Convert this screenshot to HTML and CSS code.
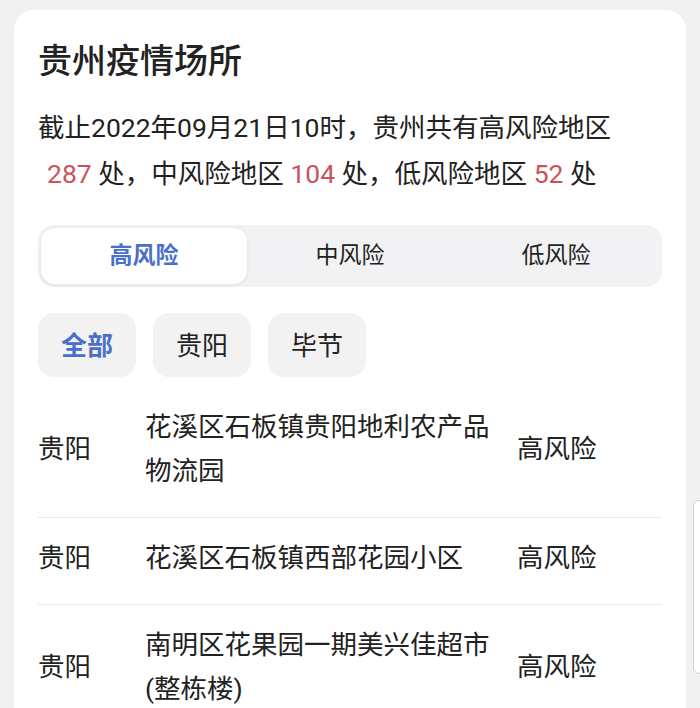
FILE: index.html
```html
<!DOCTYPE html>
<html lang="zh-CN">
<head>
<meta charset="UTF-8">
<meta name="viewport" content="width=device-width, initial-scale=1.0">
<title>贵州疫情场所</title>
<link rel="stylesheet" href="styles.css">
</head>
<body>
    <div class="card">
        <h1 class="title">贵州疫情场所</h1>
        <p class="summary">截止2022年09月21日10时，贵州共有高风险地区<br><span class="num first">287</span> 处，中风险地区 <span class="num">104</span> 处，低风险地区 <span class="num">52</span> 处</p>

        <div class="tabs">
            <div class="tab active">高风险</div>
            <div class="tab">中风险</div>
            <div class="tab">低风险</div>
        </div>

        <div class="chips">
            <div class="chip active">全部</div>
            <div class="chip">贵阳</div>
            <div class="chip">毕节</div>
        </div>

        <div class="list">
            <div class="row">
                <div class="city">贵阳</div>
                <div class="place">花溪区石板镇贵阳地利农产品物流园</div>
                <div class="level">高风险</div>
            </div>
            <div class="row">
                <div class="city">贵阳</div>
                <div class="place">花溪区石板镇西部花园小区</div>
                <div class="level">高风险</div>
            </div>
            <div class="row">
                <div class="city">贵阳</div>
                <div class="place">南明区花果园一期美兴佳超市(整栋楼)</div>
                <div class="level">高风险</div>
            </div>
        </div>
    </div>

    <div class="scroll-handle"></div>
</body>
</html>
```

FILE: styles.css
```css
body{
margin: 0;
background: #f1f1f1;
font-family: Roboto, "Noto Sans CJK SC", sans-serif;
color: #222;
overflow: hidden;
}

.card{
margin: 10px 14px 0 14px;
background: #fff;
border-radius: 20px;
padding: 30px 24px 0 24px;
}

.title{
margin: 0;
font-size: 34px;
font-weight: 500;
line-height: 43px;
}

.summary{
margin: 22px 0 0 0;
font-size: 26.5px;
line-height: 46px;
}

.num{
color: #c9545b;
}

.num.first{
margin-left: 9px;
}

.tabs{
margin-top: 28px;
display: grid;
grid-template-columns: 1fr 1fr 1fr;
padding: 3px;
background: #f2f2f4;
border-radius: 16px;
}

.tab{
height: 56px;
padding-bottom: 6px;
box-sizing: border-box;
display: flex;
align-items: center;
justify-content: center;
font-size: 23px;
color: #222;
border-radius: 14px;
}

.tab.active{
background: #fff;
color: #4a6ecb;
font-weight: bold;
box-shadow: 0 1px 4px rgba(0,0,0,0.08);
}

.chips{
margin-top: 26px;
display: flex;
gap: 17px;
}

.chip{
height: 64px;
padding: 0 23px 3px 23px;
box-sizing: border-box;
display: flex;
align-items: center;
background: #f2f2f2;
border-radius: 16px;
font-size: 26px;
}

.chip.active{
color: #4a6ecb;
font-weight: bold;
}

.list{
margin-top: 10px;
}

.row{
display: grid;
grid-template-columns: 107px 372px 1fr;
align-items: center;
padding: 18px 0 24px 0;
border-bottom: 1px solid #ebebeb;
font-size: 26.5px;
line-height: 44px;
}

.place{
padding-right: 14px;
}

.scroll-handle{
position: absolute;
top: 500px;
left: 693px;
width: 14px;
height: 172px;
background: #fff;
border: 1px solid #cfcfcf;
border-radius: 6px;
}
```
